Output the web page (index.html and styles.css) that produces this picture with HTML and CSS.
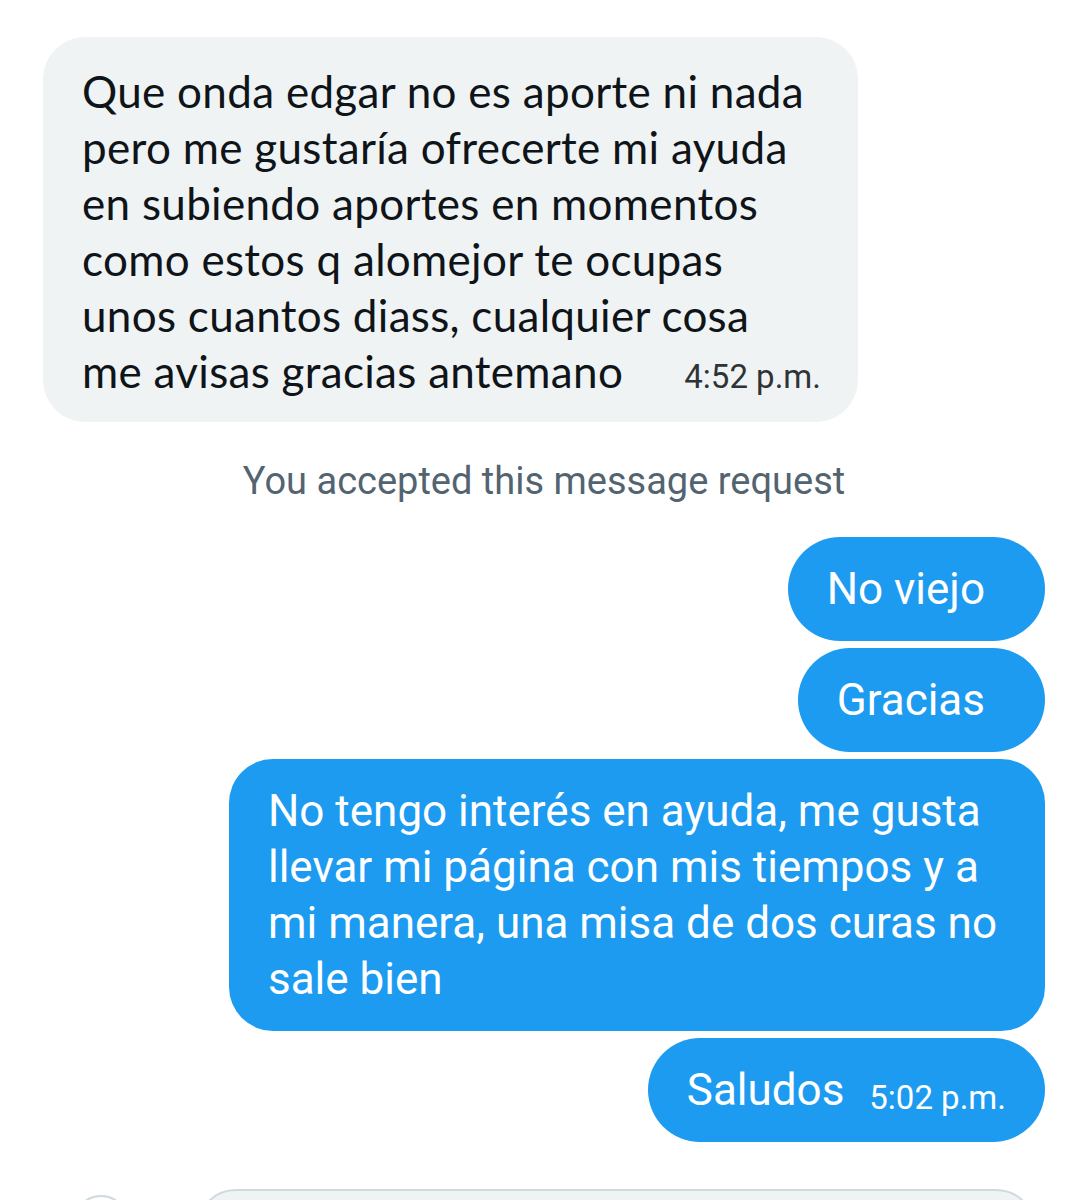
FILE: index.html
```html
<!DOCTYPE html>
<html lang="es">
<head>
  <meta charset="UTF-8">
  <meta name="viewport" content="width=device-width, initial-scale=1.0">
  <title>Mensajes</title>
  <link rel="stylesheet" href="styles.css">
</head>
<body>
  <div class="chat">
    <!-- mensaje recibido -->
    <div class="msg msg-in">
      Que onda edgar no es aporte ni nada<br>
      pero me gustaría ofrecerte mi ayuda<br>
      en subiendo aportes en momentos<br>
      como estos q alomejor te ocupas<br>
      unos cuantos diass, cualquier cosa<br>
      <span class="last-line">me avisas gracias antemano <span class="time">4:52 p.m.</span></span>
    </div>

    <div class="notice">You accepted this message request</div>

    <!-- mensajes enviados -->
    <div class="msg msg-out msg-short">No viejo</div>
    <div class="msg msg-out msg-short">Gracias</div>
    <div class="msg msg-out msg-big">
      No tengo interés en ayuda, me gusta<br>
      llevar mi página con mis tiempos y a<br>
      mi manera, una misa de dos curas no<br>
      sale bien
    </div>
    <div class="msg msg-out msg-last">Saludos <span class="time">5:02 p.m.</span></div>
  </div>

  <!-- barra de escritura -->
  <div class="composer">
    <div class="composer-btn"></div>
    <div class="composer-input"></div>
  </div>
</body>
</html>
```

FILE: styles.css
```css
body {
  margin: 0;
  height: 1200px;
  overflow: hidden;
  background: #fff;
  font-family: Roboto, "Liberation Sans", sans-serif;
  color: #0f1419;
}

.chat {
  display: flex;
  flex-direction: column;
  align-items: flex-end;
  gap: 7px;
  padding: 37px 40px 0 43px;
}

.msg {
  font-size: 44px;
  line-height: 56px;
  border-radius: 52px;
  padding: 24px 48px 24px 39px;
}

.msg-in {
  align-self: flex-start;
  width: 739px;
  padding: 26px 37px 23px 39px;
  background: #eff3f4;
  border-radius: 42px;
  font-family: Lato, "Noto Sans", sans-serif;
  letter-spacing: 0.3px;
}

.last-line {
  display: flex;
  align-items: baseline;
  justify-content: space-between;
  height: 56px;
}

.time {
  font-family: Roboto, "Liberation Sans", sans-serif;
  font-size: 33px;
  line-height: 1;
  letter-spacing: 0;
  color: #2f3336;
}

.notice {
  align-self: center;
  margin: 30px 0 27px 0;
  font-size: 38px;
  line-height: 44px;
  color: #536471;
}

.msg-out {
  background: #1d9bf0;
  color: #fff;
}

.msg-short {
  padding-right: 60px;
}

.msg-last {
  padding-right: 39px;
}

.msg-out .time {
  color: #fff;
  margin-left: 14px;
  vertical-align: -4px;
}

.msg-big {
  border-radius: 44px;
}

.composer {
  display: flex;
  align-items: flex-start;
  gap: 67px;
  height: 11px;
  overflow: hidden;
  margin-top: 47px;
  padding-left: 73px;
}

.composer-btn {
  flex: none;
  width: 56px;
  height: 56px;
  margin-top: 6px;
  border: 2px solid #cfd9de;
  border-radius: 50%;
  box-sizing: border-box;
}

.composer-input {
  flex: none;
  width: 840px;
  height: 80px;
  border: 2px solid #cfd9de;
  border-radius: 40px;
  background: #eff3f4;
  box-sizing: border-box;
}
```
